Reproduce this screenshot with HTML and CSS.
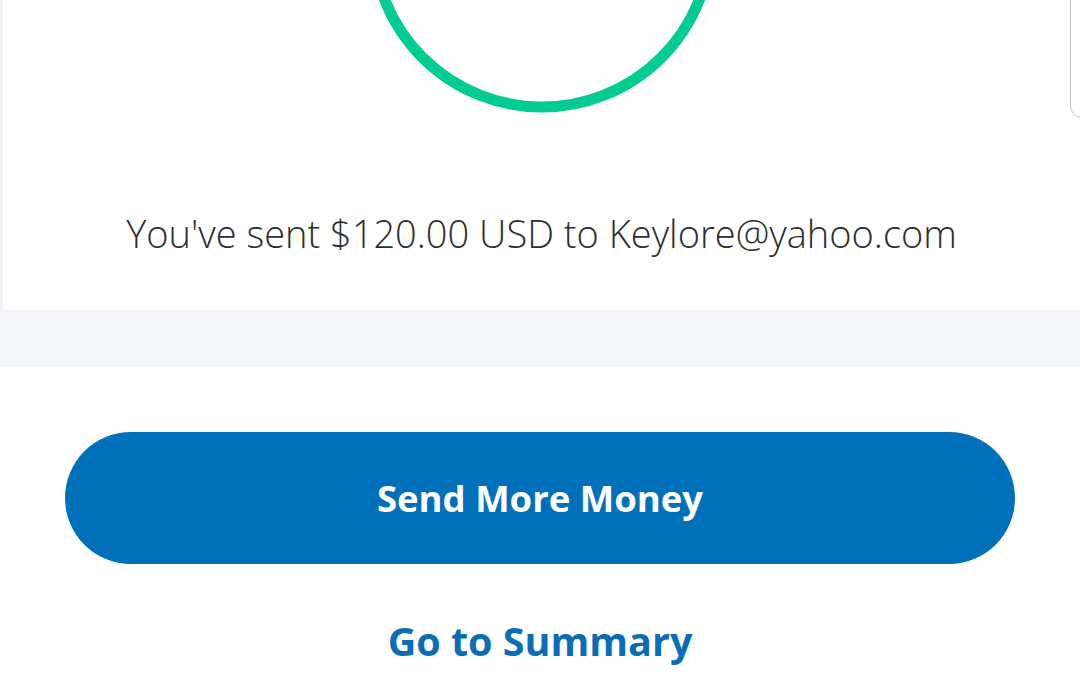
FILE: index.html
```html
<!DOCTYPE html>
<html lang="en">
<head>
<meta charset="utf-8">
<title>Payment sent</title>
<link rel="stylesheet" href="styles.css">
</head>
<body>
<div class="page">
  <section class="card">
    <svg class="check" width="360" height="114" viewBox="0 0 360 114" aria-hidden="true">
      <circle cx="180" cy="-62" r="169" fill="none" stroke="#03cc92" stroke-width="11"/>
    </svg>
    <p class="msg">You've sent $120.00 USD to Keylore@yahoo.com</p>
  </section>
  <div class="band"></div>
  <div class="actions">
    <button class="primary" type="button">Send More Money</button>
    <a class="link" href="#">Go to Summary</a>
  </div>
  <div class="scrollbar"></div>
</div>
</body>
</html>
```

FILE: styles.css
```css
html, body {
  margin: 0;
  padding: 0;
  background: #ffffff;
}
.page {
  position: relative;
  width: 1080px;
  height: 675px;
  overflow: hidden;
  font-family: "Open Sans", "Liberation Sans", sans-serif;
}
.card {
  height: 311px;
  box-sizing: border-box;
  border-left: 3px solid #f1f1f1;
  border-bottom: 1px solid #eef0f3;
  background: #ffffff;
  display: flex;
  flex-direction: column;
  align-items: center;
}
.check {
  display: block;
  flex: none;
}
.msg {
  margin: 97px 0 0;
  font-size: 38px;
  font-weight: 300;
  line-height: 44px;
  color: #2c2e2f;
  white-space: nowrap;
}
.band {
  height: 56px;
  background: #f5f6fa;
}
.actions {
  display: flex;
  flex-direction: column;
  align-items: center;
  padding-top: 65px;
}
.primary {
  width: 950px;
  height: 132px;
  border: none;
  border-radius: 66px;
  background: #0070ba;
  color: #ffffff;
  font-family: inherit;
  font-size: 36.5px;
  font-weight: 700;
  cursor: pointer;
}
.link {
  margin-top: 52px;
  font-size: 39.5px;
  font-weight: 700;
  color: #0a6db5;
  text-decoration: none;
  line-height: 50px;
}
.scrollbar {
  position: absolute;
  top: -2px;
  right: -4px;
  width: 12px;
  height: 118px;
  border: 1.5px solid #c8c8c8;
  border-radius: 0 0 0 12px;
  background: #ffffff;
}
```
